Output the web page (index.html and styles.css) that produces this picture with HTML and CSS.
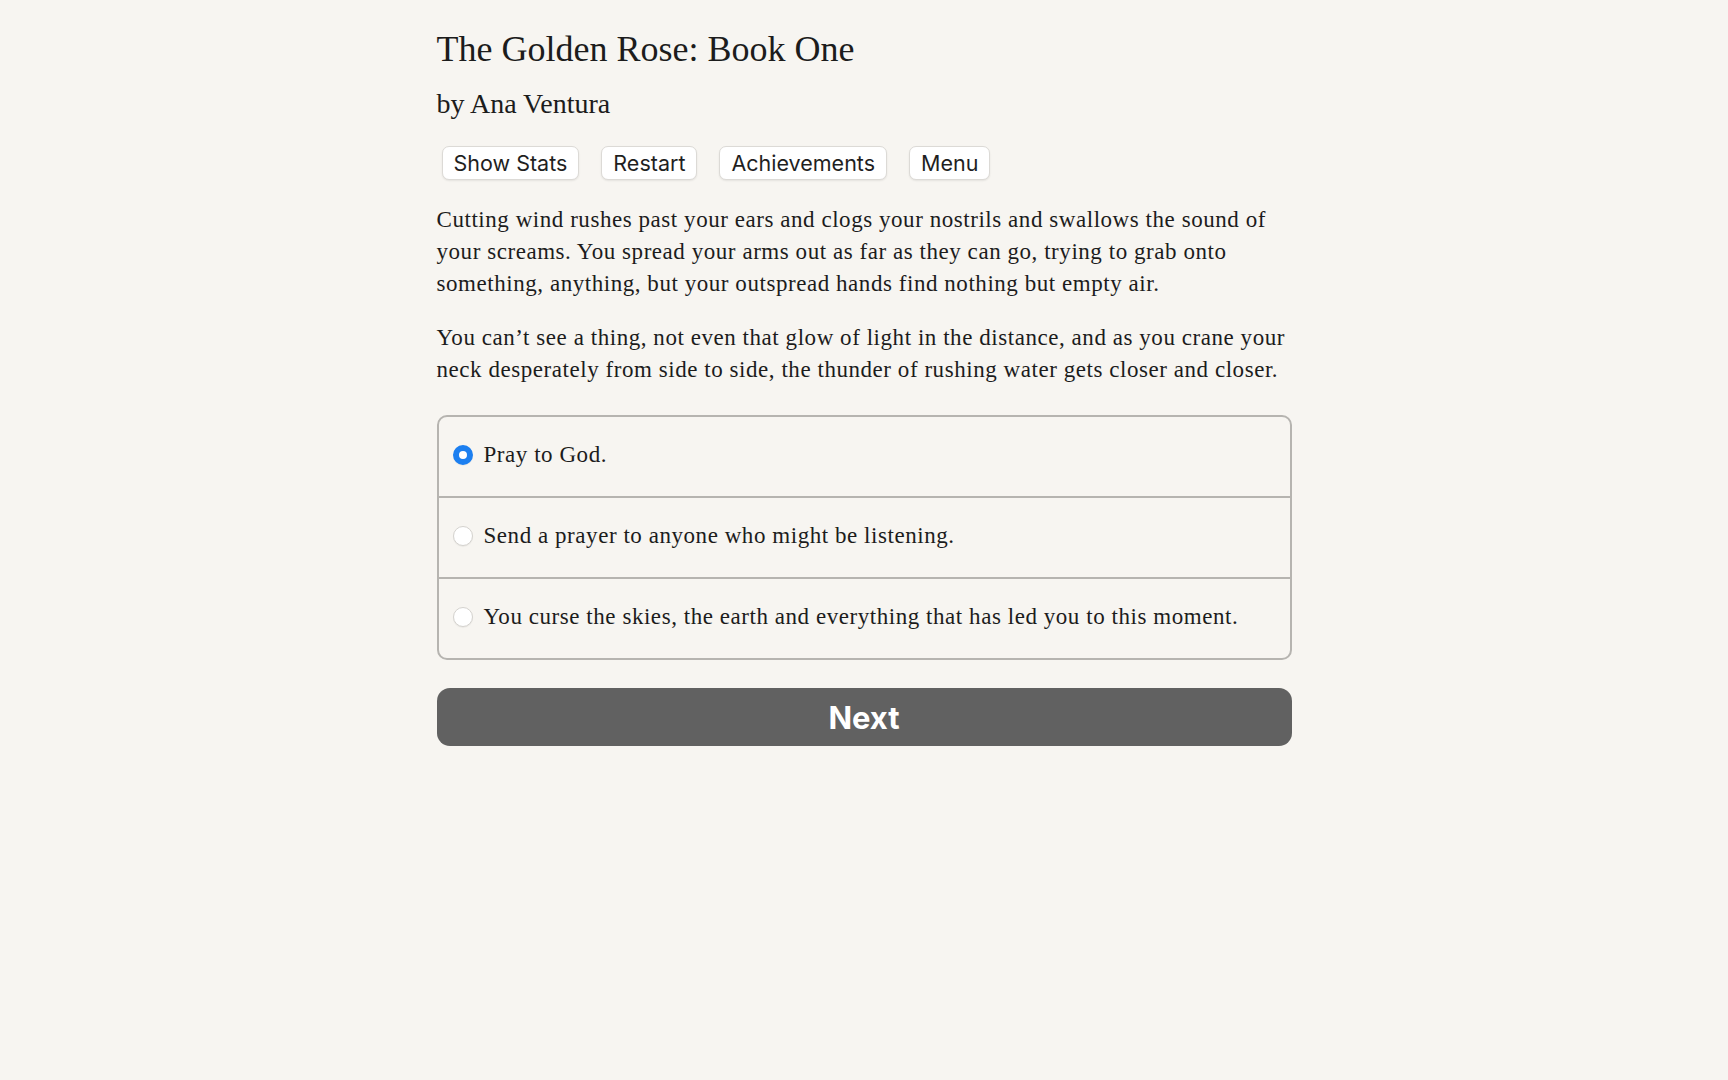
FILE: index.html
```html
<!DOCTYPE html>
<html lang="en">
<head>
<meta charset="utf-8">
<title>The Golden Rose: Book One</title>
<link rel="stylesheet" href="styles.css">
</head>
<body>
<main class="page">
  <h1 class="title">The Golden Rose: Book One</h1>
  <h2 class="author">by Ana Ventura</h2>
  <nav class="toolbar">
    <button class="tool-btn" type="button">Show Stats</button>
    <button class="tool-btn" type="button">Restart</button>
    <button class="tool-btn" type="button">Achievements</button>
    <button class="tool-btn" type="button">Menu</button>
  </nav>
  <p class="story">Cutting wind rushes past your ears and clogs your nostrils and swallows the sound of your screams. You spread your arms out as far as they can go, trying to grab onto something, anything, but your outspread hands find nothing but empty air.</p>
  <p class="story">You can’t see a thing, not even that glow of light in the distance, and as you crane your neck desperately from side to side, the thunder of rushing water gets closer and closer.</p>
  <form class="choices">
    <label class="choice">
      <input class="radio" type="radio" name="choice" checked>
      <span class="choice-text">Pray to God.</span>
    </label>
    <label class="choice">
      <input class="radio" type="radio" name="choice">
      <span class="choice-text">Send a prayer to anyone who might be listening.</span>
    </label>
    <label class="choice">
      <input class="radio" type="radio" name="choice">
      <span class="choice-text">You curse the skies, the earth and everything that has led you to this moment.</span>
    </label>
  </form>
  <button class="next-btn" type="button">Next</button>
</main>
</body>
</html>
```
FILE: styles.css
```css
html, body {
  margin: 0;
  padding: 0;
  background: #f7f5f1;
}

body {
  color: #1c1c1c;
  font-family: "Liberation Serif", "Times New Roman", serif;
}

.page {
  width: 855px;
  margin: 0 auto;
  padding-top: 27px;
}

.title {
  margin: 0;
  font-size: 36px;
  line-height: 44px;
  font-weight: normal;
  letter-spacing: 0;
}

.author {
  margin: 15px 0 0;
  font-size: 28px;
  line-height: 36px;
  font-weight: normal;
}

.toolbar {
  display: flex;
  gap: 22px;
  margin: 24px 0 0 5px;
}

.tool-btn {
  height: 34px;
  padding: 0 11px;
  background: #ffffff;
  border: 1px solid #dcdad6;
  border-radius: 7px;
  box-shadow: 0 1px 2px rgba(0, 0, 0, 0.08);
  font-family: "Inter", "Liberation Sans", sans-serif;
  font-size: 21.5px;
  color: #1f1f1f;
  cursor: pointer;
}

.story {
  margin: 24px 0 0;
  font-size: 23px;
  line-height: 32px;
  letter-spacing: 0.55px;
}

.story + .story {
  margin-top: 22px;
}

.choices {
  margin: 29px 0 0;
  border: 2px solid #b6b4b0;
  border-radius: 10px;
  overflow: hidden;
}

.choice {
  display: flex;
  align-items: center;
  gap: 11px;
  height: 79px;
  padding: 0 14px 4px;
  box-sizing: border-box;
  font-size: 23px;
  letter-spacing: 0.55px;
  cursor: pointer;
}

.choice + .choice {
  border-top: 2px solid #b6b4b0;
  height: 81px;
}

.radio {
  appearance: none;
  -webkit-appearance: none;
  flex: none;
  width: 20px;
  height: 20px;
  margin: 0;
  border-radius: 50%;
  background: #ffffff;
  border: 1px solid #d4d2ce;
  box-shadow: 0 1px 1px rgba(0, 0, 0, 0.05);
}

.radio:checked {
  border: 6.5px solid #1c7ff0;
  background: #ffffff;
}

.next-btn {
  display: block;
  width: 100%;
  height: 58px;
  margin-top: 28px;
  background: #616161;
  border: none;
  border-radius: 13px;
  color: #ffffff;
  font-family: "Inter", "Liberation Sans", sans-serif;
  font-size: 31px;
  font-weight: 700;
  cursor: pointer;
}
```
